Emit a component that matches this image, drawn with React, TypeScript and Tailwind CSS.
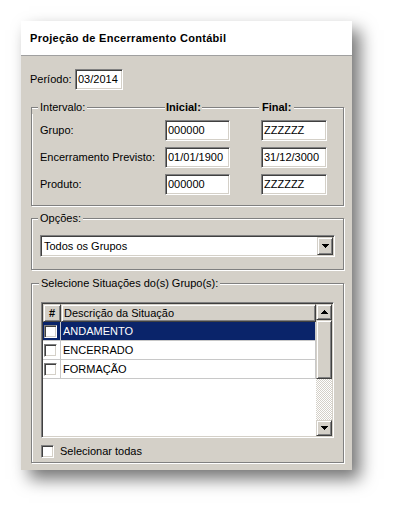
import React from "react";

const sunken =
  "border border-t-[#808080] border-l-[#808080] border-b-white border-r-white shadow-[inset_1px_1px_0_#404040,inset_-1px_-1px_0_#d4d0c8]";
const raised =
  "border border-t-[#d4d0c8] border-l-[#d4d0c8] border-b-[#404040] border-r-[#404040] shadow-[inset_1px_1px_0_#ffffff,inset_-1px_-1px_0_#808080]";
const etched =
  "border border-[#808080] shadow-[inset_1px_1px_0_#ffffff,1px_1px_0_#ffffff]";

const Line = ({ className = "" }: { className?: string }) => (
  <span
    className={`h-[2px] border-t border-b border-t-[#808080] border-b-white ${className}`}
  />
);

const ArrowDown = () => (
  <svg width="7" height="4" viewBox="0 0 7 4" className="block">
    <path d="M0 0h7v1H0zM1 1h5v1H1zM2 2h3v1H2zM3 3h1v1H3z" fill="#000" />
  </svg>
);

const ArrowUp = () => (
  <svg width="7" height="4" viewBox="0 0 7 4" className="block">
    <path d="M3 0h1v1H3zM2 1h3v1H2zM1 2h5v1H1zM0 3h7v1H0z" fill="#000" />
  </svg>
);

const Field = ({ value, width }: { value: string; width: string }) => (
  <div
    className={`h-[21px] ${width} ${sunken} bg-white pl-[2px] flex items-center`}
  >
    {value}
  </div>
);

const Check = () => (
  <span className={`block w-[13px] h-[13px] bg-white ${sunken}`} />
);

const rows = [
  { label: "ANDAMENTO", selected: true },
  { label: "ENCERRADO", selected: false },
  { label: "FORMAÇÃO", selected: false },
];

const App = () => {
  return (
    <div className="min-h-[513px] bg-white pt-[21px] pl-[21px] font-['Liberation_Sans',Arial,sans-serif] text-[11px] text-black leading-[13px]">
      <div className="w-[331px] h-[449px] bg-[#d4d0c8] flex flex-col shadow-[8px_9px_16px_rgba(0,0,0,0.55)]">
        <div className="h-[35px] bg-white border-b border-[#a0a0a0] flex items-center pl-[9px] font-bold tracking-[0.3px]">
          Projeção de Encerramento Contábil
        </div>

        <div className="flex items-center h-[21px] mt-[13px] pl-[9px]">
          <span className="w-[45px]">Período:</span>
          <Field value="03/2014" width="w-[48px]" />
        </div>

        <fieldset className={`mt-[11px] ml-[10px] w-[313px] ${etched}`}>
          <legend className="w-full h-[13px] bg-[#d4d0c8] flex">
            <span className="w-[133px] flex">
              <Line className="w-[6px] mt-[6px]" />
              <span className="px-[2px] font-normal">Intervalo:</span>
              <Line className="flex-1 mt-[6px]" />
            </span>
            <span className="w-[96px] flex">
              <span className="px-[1px] font-bold">Inicial:</span>
              <Line className="flex-1 mt-[6px] mr-[2px]" />
            </span>
            <span className="flex-1 flex">
              <span className="px-[1px] font-bold">Final:</span>
              <Line className="flex-1 mt-[6px] ml-[2px]" />
            </span>
          </legend>
          <div className="flex flex-col gap-[6px] pt-[6px] pb-[10px] pl-[8px]">
            {[
              ["Grupo:", "000000", "ZZZZZZ"],
              ["Encerramento Previsto:", "01/01/1900", "31/12/3000"],
              ["Produto:", "000000", "ZZZZZZ"],
            ].map(([label, from, to]) => (
              <div key={label} className="flex items-center">
                <span className="w-[125px]">{label}</span>
                <Field value={from} width="w-[65px]" />
                <span className="w-[31px]" />
                <Field value={to} width="w-[66px]" />
              </div>
            ))}
          </div>
        </fieldset>

        <fieldset
          className={`mt-[6px] ml-[10px] w-[313px] px-[8px] pt-[10px] pb-[12px] ${etched}`}
        >
          <legend className="-ml-[2px] px-[2px] h-[13px] bg-[#d4d0c8]">
            Opções:
          </legend>
          <div className={`h-[22px] bg-white flex ${sunken} p-[1px]`}>
            <span className="flex-1 flex items-center pl-[2px]">
              Todos os Grupos
            </span>
            <span
              className={`w-[16px] h-full bg-[#d4d0c8] flex items-center justify-center ${raised}`}
            >
              <ArrowDown />
            </span>
          </div>
        </fieldset>

        <fieldset
          className={`mt-[7px] ml-[10px] w-[313px] pl-[9px] pr-[9px] pt-[12px] pb-[4px] ${etched}`}
        >
          <legend className="-ml-[2px] px-[2px] h-[13px] bg-[#d4d0c8]">
            Selecione Situações do(s) Grupo(s):
          </legend>
          <div className={`h-[136px] flex ${sunken} p-[1px]`}>
            <div className="flex-1 flex flex-col bg-white">
              <div className="flex h-[18px]">
                <span
                  className={`w-[18px] bg-[#d4d0c8] flex items-center justify-center font-bold ${raised}`}
                >
                  #
                </span>
                <span
                  className={`flex-1 bg-[#d4d0c8] flex items-center pl-[2px] ${raised}`}
                >
                  Descrição da Situação
                </span>
              </div>
              {rows.map((r) => (
                <div
                  key={r.label}
                  className={`flex h-[19px] border-b border-r border-[#c8c8c8] ${
                    r.selected ? "bg-[#0a246a] text-white" : "bg-white"
                  }`}
                >
                  <span className="w-[18px] border-r border-[#c8c8c8] flex items-center pl-[1px]">
                    <Check />
                  </span>
                  <span className="flex-1 flex items-center pl-[2px]">
                    {r.label}
                  </span>
                </div>
              ))}
            </div>
            <div className="w-[16px] flex flex-col">
              <span
                className={`h-[16px] bg-[#d4d0c8] flex items-center justify-center ${raised}`}
              >
                <ArrowUp />
              </span>
              <span className={`h-[59px] bg-[#d4d0c8] ${raised}`} />
              <span className="flex-1 bg-[image:repeating-conic-gradient(#d4d0c8_0%_25%,#ffffff_0%_50%)] bg-[length:2px_2px]" />
              <span
                className={`h-[16px] bg-[#d4d0c8] flex items-center justify-center ${raised}`}
              >
                <ArrowDown />
              </span>
            </div>
          </div>
          <div className="flex items-center h-[13px] mt-[7px]">
            <Check />
            <span className="ml-[6px]">Selecionar todas</span>
          </div>
        </fieldset>
      </div>
    </div>
  );
};

export default App;
